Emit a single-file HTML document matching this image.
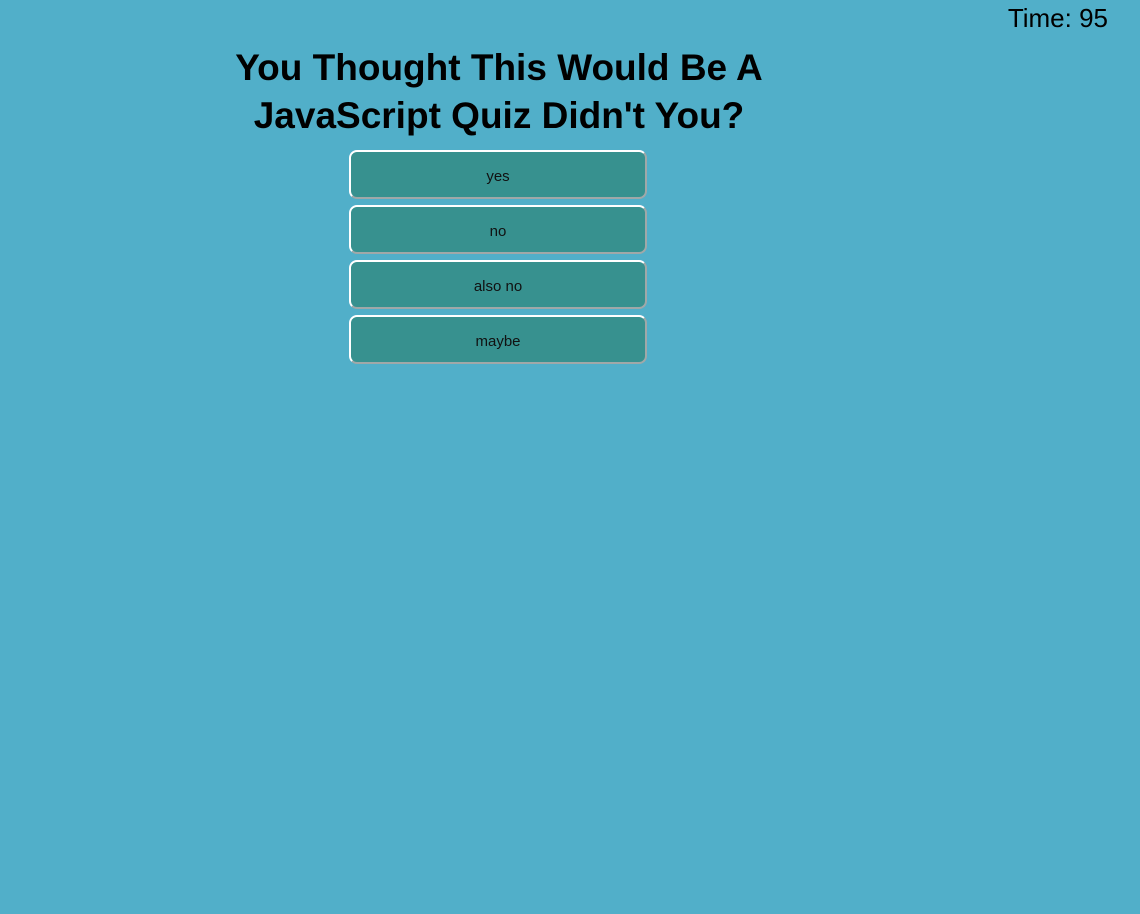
<!DOCTYPE html>
<html><head><style>
body{margin:0;width:1140px;height:914px;background:#51afc9;font-family:"Liberation Sans",sans-serif;position:relative;overflow:hidden}
#t{position:absolute;right:32px;top:3px;font-size:26px;color:#000}
h1{position:absolute;left:149px;width:700px;top:44px;margin:0;text-align:center;font-size:37px;line-height:48px;font-weight:bold;color:#000}
.b{position:absolute;left:349px;width:294px;height:45px;border:2px solid;border-top-color:#fff;border-left-color:#fff;border-right-color:#a0a8a8;border-bottom-color:#a0a8a8;border-radius:8px;background:#37918f;text-align:center;line-height:49px;font-size:15px;color:#111}
</style></head><body>
<div id="t">Time: 95</div>
<h1>You Thought This Would Be A<br>JavaScript Quiz Didn't You?</h1>
<div class="b" style="top:150px">yes</div>
<div class="b" style="top:205px">no</div>
<div class="b" style="top:260px">also no</div>
<div class="b" style="top:315px">maybe</div>
</body></html>
